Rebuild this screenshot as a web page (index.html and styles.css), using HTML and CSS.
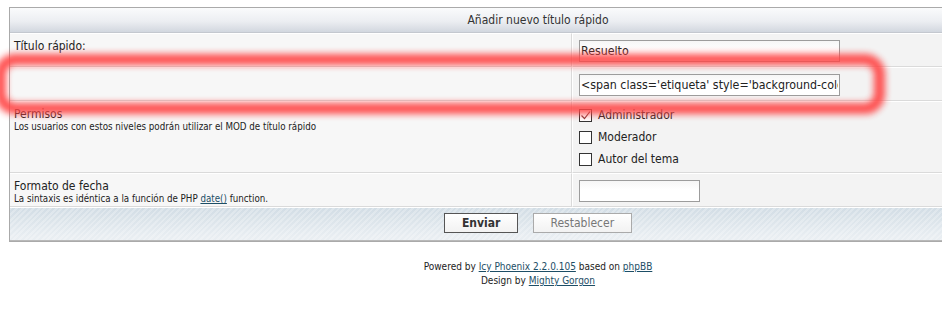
FILE: index.html
```html
<!DOCTYPE html>
<html lang="es">
<head>
  <meta charset="UTF-8">
  <title>Añadir nuevo título rápido</title>
  <link rel="stylesheet" href="styles.css">
</head>
<body>
  <div class="page">
    <form class="quick-title" action="#">
      <table class="forumline">
        <tr>
          <th colspan="2">Añadir nuevo título rápido</th>
        </tr>
        <tr>
          <td class="row1"><span class="label">Título rápido:</span></td>
          <td class="row2"><input class="post" type="text" value="Resuelto"></td>
        </tr>
        <tr>
          <td class="row1">&nbsp;</td>
          <td class="row2"><input class="post" type="text" value="<span class='etiqueta' style='background-color:#3a3'>Resuelto</span>"></td>
        </tr>
        <tr>
          <td class="row1">
            <span class="label">Permisos</span>
            <span class="explain">Los usuarios con estos niveles podrán utilizar el MOD de título rápido</span>
          </td>
          <td class="row2 checks">
            <label class="check"><span class="box"><svg viewBox="0 0 13 13" width="13" height="13"><path d="M2.5 6.5 L5.5 9.5 L11 2.5" fill="none" stroke="#8a3b3b" stroke-width="1.2"/></svg></span>Administrador</label>
            <label class="check"><span class="box"></span>Moderador</label>
            <label class="check"><span class="box"></span>Autor del tema</label>
          </td>
        </tr>
        <tr>
          <td class="row1">
            <span class="label">Formato de fecha</span>
            <span class="explain">La sintaxis es idéntica a la función de PHP <a href="#">date()</a> function.</span>
          </td>
          <td class="row2"><input class="post short" type="text" value=""></td>
        </tr>
        <tr>
          <td class="cat" colspan="2">
            <button class="mainoption" type="button">Enviar</button>
            <button class="liteoption" type="button">Restablecer</button>
          </td>
        </tr>
      </table>
      <!-- highlight drawn over the second field -->
      <div class="highlight"></div>
    </form>

    <div class="copyright">
      Powered by <a href="#">Icy Phoenix 2.2.0.105</a> based on <a href="#">phpBB</a><br>
      Design by <a href="#">Mighty Gorgon</a>
    </div>
  </div>
</body>
</html>
```

FILE: styles.css
```css
html, body {
  margin: 0;
  overflow: hidden;
}

body {
  background-color: #fff;
  font-family: "DejaVu Sans Condensed", "DejaVu Sans", sans-serif;
  color: #222;
}

.page {
  width: 1058px;
  padding: 7px 0 0 9px;
}

.quick-title {
  position: relative;
  margin: 0;
}

.forumline {
  width: 1058px;
  border: 1px solid #aaa;
  border-spacing: 0;
  background-color: #f5f5f5;
}

.forumline th {
  height: 24px;
  padding: 0;
  font-size: 12px;
  font-weight: normal;
  color: #333;
  text-align: center;
  background: linear-gradient(#fafbfc, #eceef2 55%, #d2d7df);
  border-bottom: 1px solid #c4c8cf;
}

.forumline td {
  border-top: 1px solid #fff;
  border-bottom: 1px solid #dadada;
  vertical-align: top;
}

.row1 {
  width: 553px;
  height: 27px;
  padding: 5px 4px 0 4px;
  background-color: #f7f7f7;
  border-right: 1px solid #dadada;
}

.row2 {
  padding: 6px 6px 4px 6px;
  background-color: #f3f3f3;
  border-left: 1px solid #fff;
}

.label {
  display: block;
  font-size: 12px;
  line-height: 14px;
}

.explain {
  display: block;
  font-size: 9.7px;
  line-height: 12px;
}

.explain a,
.copyright a {
  color: #1d4e66;
}

.post {
  display: block;
  box-sizing: border-box;
  width: 261px;
  height: 22px;
  margin: 0;
  padding: 0 1px;
  font-family: "DejaVu Sans Condensed", "DejaVu Sans", sans-serif;
  font-size: 12.3px;
  color: #222;
  border: 1px solid #9c9c9c;
  background: linear-gradient(#f6f6f6, #fff 45%);
}

.post.short {
  width: 121px;
}

.forumline td.checks {
  padding-top: 2px;
  padding-bottom: 2px;
}

.check {
  display: flex;
  align-items: center;
  height: 22px;
  font-size: 12px;
}

.box {
  display: inline-block;
  box-sizing: border-box;
  width: 13px;
  height: 13px;
  margin-right: 6px;
  background-color: #fff;
  border: 1px solid #333;
}

.box svg {
  display: block;
  margin: -1px 0 0 -1px;
}

.forumline td.cat {
  height: 28px;
  padding: 4px 0 0 0;
  text-align: center;
  border-bottom: 1px solid #b9b9b9;
  background:
    repeating-linear-gradient(135deg, rgba(255, 255, 255, 0.25) 0 2px, rgba(255, 255, 255, 0) 2px 4px),
    linear-gradient(#d2dde5, #e9eef2 90%);
}

.cat button {
  height: 20px;
  margin: 0 5px;
  padding: 0;
  font-family: "DejaVu Sans Condensed", "DejaVu Sans", sans-serif;
  font-size: 12px;
  background: linear-gradient(#fff, #f2f2f2);
  cursor: pointer;
}

.mainoption {
  width: 74px;
  font-weight: bold;
  color: #333;
  border: 1px solid #555;
}

.liteoption {
  width: 99px;
  color: #777;
  border: 1px solid #aaa;
}

.highlight {
  position: absolute;
  left: -14px;
  top: 47px;
  width: 868px;
  height: 38px;
  border: 11px solid rgb(255, 70, 70);
  border-radius: 20px;
  opacity: 0.95;
  filter: blur(3.5px);
  pointer-events: none;
}

.copyright {
  margin-top: 18px;
  font-size: 10px;
  line-height: 14px;
  text-align: center;
  color: #222;
}
```
